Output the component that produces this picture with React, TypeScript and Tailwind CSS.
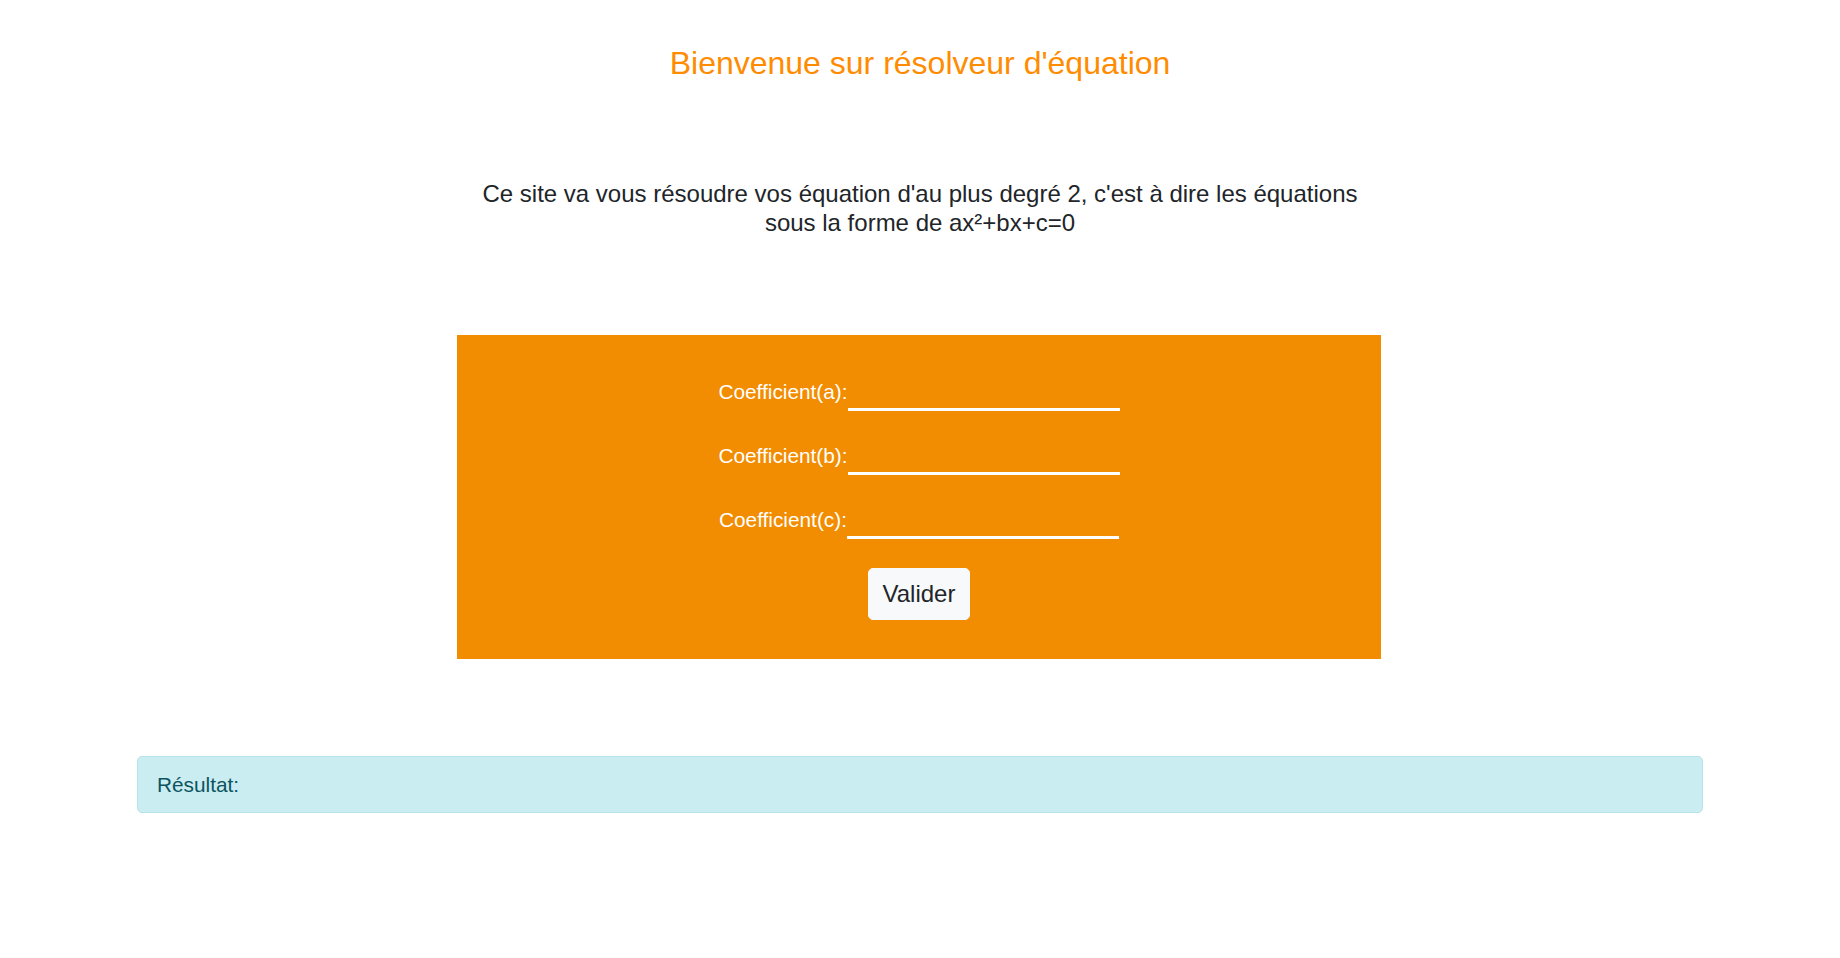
import React from "react";

export default function App() {
  const rows = ["a", "b", "c"];
  return (
    <div className="min-h-screen bg-white font-['Liberation_Sans',Arial,sans-serif] text-[#212529]">
      <h1 className="pt-[44px] text-center text-[32px] font-normal leading-[1.2] text-[#ff8c00]">
        Bienvenue sur résolveur d'équation
      </h1>
      <p className="mx-auto mt-[97px] w-[900px] text-center text-[24px] leading-[29px]">
        Ce site va vous résoudre vos équation d'au plus degré 2, c'est à dire les équations sous la forme de ax²+bx+c=0
      </p>
      <div className="ml-[457px] mt-[98px] flex w-[924px] flex-col items-center bg-[#f28c00] pb-[39px] pt-[42px]">
        <div className="flex flex-col gap-[30px]">
          {rows.map((r) => (
            <div key={r} className="flex items-end justify-center">
              <label className="mb-[4px] text-[20.8px] leading-[30px] text-white">
                Coefficient({r}):
              </label>
              <input
                type="text"
                className="h-[34px] w-[272px] border-0 border-b-[3px] border-solid border-white bg-transparent text-white outline-none"
              />
            </div>
          ))}
        </div>
        <button className="mt-[29px] h-[52px] rounded-[5px] border border-[#f8f9fa] bg-[#f8f9fa] px-[14px] text-[24px] leading-[36px] text-[#212529]">
          Valider
        </button>
      </div>
      <div className="mx-[137px] mt-[97px] rounded-[5px] border border-[#b8e3ea] bg-[#caedf1] px-[19px] py-[12px] text-[20.8px] leading-[31px] text-[#0c5460]">
        Résultat:
      </div>
    </div>
  );
}
